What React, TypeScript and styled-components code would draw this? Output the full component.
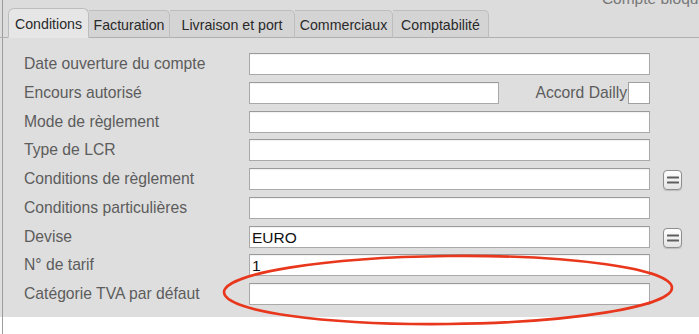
import styled, { createGlobalStyle } from 'styled-components'

const GlobalStyle = createGlobalStyle`
  html, body {
    margin: 0;
    padding: 0;
    background: #fff;
  }
  body {
    font-family: 'Liberation Sans', Arial, Helvetica, sans-serif;
  }
`

const frameEdge = (color: string) =>
  `linear-gradient(to right, ${color} 0 2px, #9c9c9c 2px 3px, ${color} 3px)`

interface Field {
  label: string
  value?: string
  short?: boolean
  checkbox?: string
  lookup?: boolean
}

const tabs = [
  { title: 'Conditions', width: 81 },
  { title: 'Facturation', width: 81 },
  { title: 'Livraison et port', width: 125 },
  { title: 'Commerciaux', width: 98 },
  { title: 'Comptabilité', width: 96 },
]

const fields: Field[] = [
  { label: 'Date ouverture du compte' },
  { label: 'Encours autorisé', short: true, checkbox: 'Accord Dailly' },
  { label: 'Mode de règlement' },
  { label: 'Type de LCR' },
  { label: 'Conditions de règlement', lookup: true },
  { label: 'Conditions particulières' },
  { label: 'Devise', value: 'EURO', lookup: true },
  { label: 'N° de tarif', value: '1' },
  { label: 'Catégorie TVA par défaut' },
]

const App = () => {
  return (
    <Page>
      <GlobalStyle />
      <Header>
        <TabBar>
          {tabs.map((tab, i) => (
            <Tab key={tab.title} $active={i === 0} $width={tab.width}>
              {tab.title}
            </Tab>
          ))}
        </TabBar>
        <Status>Compte bloqué</Status>
      </Header>

      <Panel>
        {fields.map((f) => (
          <Row key={f.label}>
            <Label>{f.label}</Label>
            <FieldCell>
              <TextBox $short={f.short}>{f.value}</TextBox>
              {f.checkbox && (
                <CheckGroup>
                  <CheckLabel>{f.checkbox}</CheckLabel>
                  <CheckBox />
                </CheckGroup>
              )}
            </FieldCell>
            <ActionCell>
              {f.lookup && (
                <LookupButton>
                  <svg width="12" height="8" viewBox="0 0 12 8">
                    <rect x="0" y="0.5" width="12" height="2" rx="0.5" fill="#5e5e5e" />
                    <rect x="0" y="5.5" width="12" height="2" rx="0.5" fill="#5e5e5e" />
                  </svg>
                </LookupButton>
              )}
            </ActionCell>
          </Row>
        ))}
        <Highlight width="460" height="80" viewBox="0 0 460 80">
          <ellipse
            cx="230"
            cy="38"
            rx="224"
            ry="34"
            fill="none"
            stroke="#e8371c"
            strokeWidth="2.6"
            transform="rotate(-0.6 230 38)"
          />
        </Highlight>
      </Panel>
    </Page>
  )
}

const Page = styled.div`
  width: 699px;
  height: 334px;
  overflow: hidden;
  background: ${frameEdge('#ffffff')};
`

const Header = styled.div`
  height: 38px;
  display: flex;
  align-items: flex-start;
  background: ${frameEdge('#dcdcdc')};
  box-shadow: inset 0 -1px 0 #b0b0b0;
`

const TabBar = styled.div`
  display: flex;
  align-items: flex-end;
  height: 38px;
  padding-left: 8px;
`

const Tab = styled.div<{ $active?: boolean; $width: number }>`
  width: ${({ $width }) => $width}px;
  height: ${({ $active }) => ($active ? '30px' : '28px')};
  box-sizing: border-box;
  display: flex;
  align-items: center;
  justify-content: center;
  padding-top: ${({ $active }) => ($active ? '2px' : '1px')};
  font-size: 14.2px;
  color: #2a2a2a;
  background: ${({ $active }) => ($active ? '#e6e6e6' : '#d4d4d4')};
  border: 1px solid #bdbdbd;
  border-bottom: ${({ $active }) => ($active ? '1px solid #e6e6e6' : '1px solid #b0b0b0')};
  border-left-width: ${({ $active }) => ($active ? '1px' : '0')};
  border-radius: ${({ $active }) => ($active ? '6px 6px 0 0' : '0 5px 0 0')};
  white-space: nowrap;
`

const Status = styled.div`
  margin-left: auto;
  margin-right: -8px;
  margin-top: -9px;
  font-size: 15.5px;
  line-height: 15px;
  color: #777;
  white-space: nowrap;
`

const Panel = styled.div`
  position: relative;
  height: 279px;
  box-sizing: border-box;
  padding: 15px 0 0 24px;
  background: ${frameEdge('#dedede')};
  display: flex;
  flex-direction: column;
  gap: 6.75px;
`

const Row = styled.div`
  display: grid;
  grid-template-columns: 225px 401px 37px;
  align-items: center;
  height: 22px;
`

const Label = styled.div`
  font-size: 15.7px;
  color: #5c5c5c;
  white-space: nowrap;
`

const FieldCell = styled.div`
  display: flex;
  align-items: center;
  justify-content: space-between;
`

const TextBox = styled.div<{ $short?: boolean }>`
  width: ${({ $short }) => ($short ? '250px' : '401px')};
  height: 22px;
  box-sizing: border-box;
  background: #fff;
  border: 1px solid #a9a9a9;
  border-top-color: #9a9a9a;
  box-shadow: inset 0 1px 1px rgba(0, 0, 0, 0.06);
  padding: 1px 2px 0;
  font-size: 15.5px;
  line-height: 19px;
  color: #111;
`

const CheckGroup = styled.div`
  display: flex;
  align-items: center;
  gap: 1px;
`

const CheckLabel = styled.span`
  font-size: 15.7px;
  color: #5c5c5c;
`

const CheckBox = styled.div`
  width: 22px;
  height: 22px;
  box-sizing: border-box;
  background: #fff;
  border: 1px solid #a0a0a0;
`

const ActionCell = styled.div`
  display: flex;
  align-items: center;
  padding-left: 13px;
`

const LookupButton = styled.div`
  width: 19px;
  height: 20px;
  box-sizing: border-box;
  border: 1px solid #8e8e8e;
  border-radius: 4px;
  background: linear-gradient(#ffffff, #e4e4e4);
  box-shadow: 0 1px 1px rgba(0, 0, 0, 0.15);
  display: flex;
  align-items: center;
  justify-content: center;
  margin-top: 2px;
`

const Highlight = styled.svg`
  position: absolute;
  left: 218px;
  top: 214px;
  overflow: visible;
  pointer-events: none;
`

export default App
